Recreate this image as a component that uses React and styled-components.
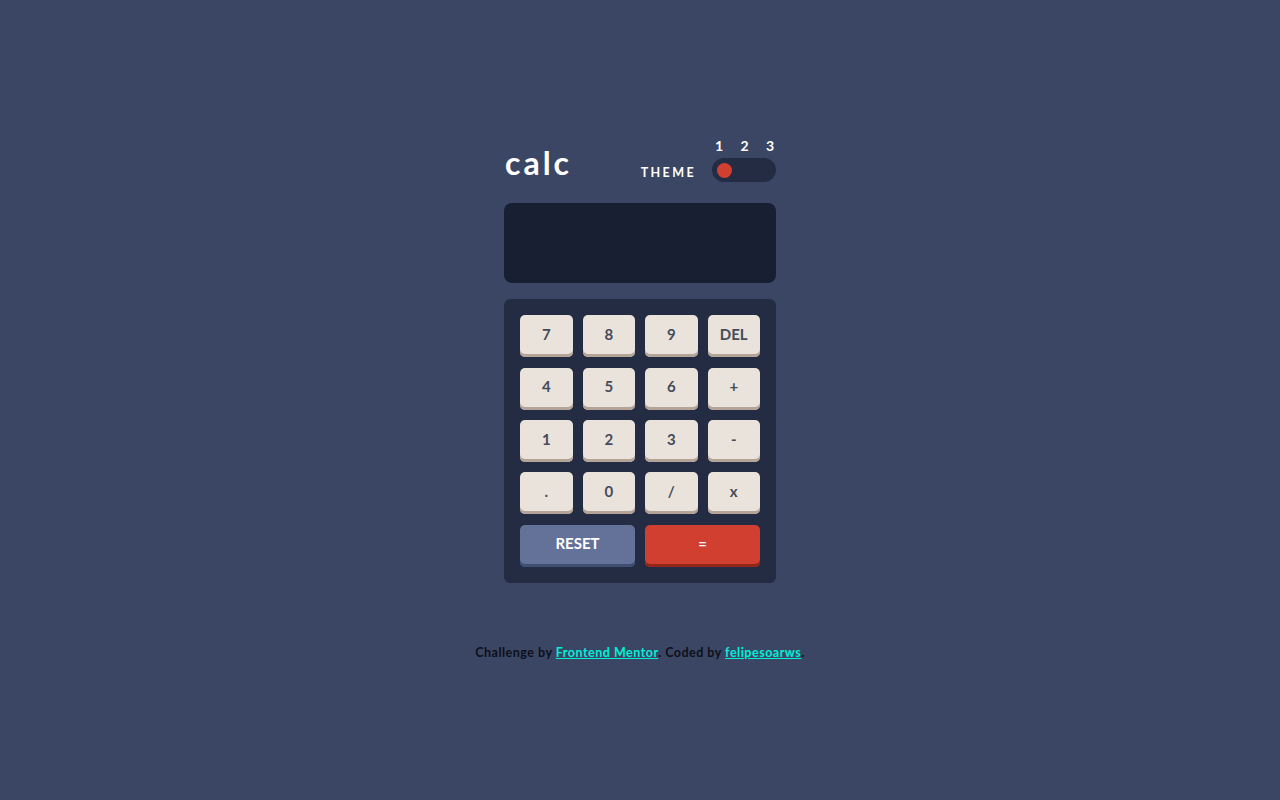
import React from 'react';
import styled, { createGlobalStyle } from 'styled-components';

const Colors = {
  page: '#3a4663',
  screen: '#181f33',
  keypad: '#232c43',
  key: '#eae3dc',
  keyShadow: '#b3a497',
  keyText: '#444b5a',
  reset: '#647198',
  resetShadow: '#414e73',
  equals: '#d03f2f',
  equalsShadow: '#93261a',
  white: '#ffffff',
  link: '#00f0d8',
};

const keys = ['7', '8', '9', 'DEL', '4', '5', '6', '+', '1', '2', '3', '-', '.', '0', '/', 'x'];

const GlobalStyle = createGlobalStyle`
  * { box-sizing: border-box; }
  body {
    margin: 0;
    background: ${Colors.page};
    font-family: Lato, "Noto Sans", sans-serif;
  }
`;

function App() {
  return (
    <Page>
      <GlobalStyle />
      <Calculator>
        <Header>
          <Title>calc</Title>
          <ThemeGroup>
            <ThemeLabel>THEME</ThemeLabel>
            <SwitchColumn>
              <Numbers>
                <span>1</span>
                <span>2</span>
                <span>3</span>
              </Numbers>
              <Toggle>
                <Dot />
              </Toggle>
            </SwitchColumn>
          </ThemeGroup>
        </Header>
        <Screen />
        <Keypad>
          {keys.map((k) => (
            <Key key={k}>{k}</Key>
          ))}
          <WideKey variant="reset">RESET</WideKey>
          <WideKey variant="equals">=</WideKey>
        </Keypad>
      </Calculator>
      <Attribution>
        Challenge by <Link href="#">Frontend Mentor</Link>. Coded by <Link href="#">felipesoarws</Link>.
      </Attribution>
    </Page>
  );
}

const Page = styled.main`
  min-height: 100vh;
  display: flex;
  flex-direction: column;
  align-items: center;
  justify-content: center;
  padding-bottom: 1px;
`;

const Calculator = styled.div`
  width: 272px;
`;

const Header = styled.header`
  display: flex;
  justify-content: space-between;
  align-items: flex-end;
  padding-left: 1px;
`;

const Title = styled.h1`
  margin: 0 0 3px;
  color: ${Colors.white};
  font-size: 32px;
  font-weight: 700;
  line-height: 1;
  letter-spacing: 3px;
`;

const ThemeGroup = styled.div`
  display: flex;
  align-items: flex-end;
  gap: 16px;
`;

const ThemeLabel = styled.span`
  color: ${Colors.white};
  font-size: 12.5px;
  font-weight: 700;
  letter-spacing: 2.4px;
  margin-bottom: 2px;
`;

const SwitchColumn = styled.div`
  display: flex;
  flex-direction: column;
  width: 64px;
`;

const Numbers = styled.div`
  display: flex;
  justify-content: space-between;
  padding: 0 2px 0 3px;
  color: ${Colors.white};
  font-size: 14px;
  font-weight: 700;
  line-height: 1;
  margin-bottom: 5px;
`;

const Toggle = styled.div`
  height: 24px;
  border-radius: 12px;
  background: ${Colors.keypad};
  display: flex;
  align-items: center;
  padding: 0 5px;
`;

const Dot = styled.span`
  width: 15px;
  height: 15px;
  border-radius: 50%;
  background: ${Colors.equals};
`;

const Screen = styled.div`
  margin-top: 21px;
  height: 80px;
  border-radius: 8px;
  background: ${Colors.screen};
`;

const Keypad = styled.div`
  margin-top: 16px;
  padding: 16px;
  border-radius: 6px;
  background: ${Colors.keypad};
  display: grid;
  grid-template-columns: repeat(4, 1fr);
  grid-auto-rows: 42px;
  column-gap: 10px;
  row-gap: 10.3px;
`;

const Key = styled.button`
  border: none;
  border-radius: 5px;
  background: ${Colors.key};
  box-shadow: inset 0 -3px 0 ${Colors.keyShadow};
  color: ${Colors.keyText};
  font-family: inherit;
  font-size: 15px;
  font-weight: 700;
  padding: 0 0 5px;
  cursor: pointer;
`;

const WideKey = styled(Key)`
  grid-column: span 2;
  background: ${(p) => (p.variant === 'reset' ? Colors.reset : Colors.equals)};
  box-shadow: inset 0 -3px 0 ${(p) => (p.variant === 'reset' ? Colors.resetShadow : Colors.equalsShadow)};
  color: ${Colors.white};
`;

const Attribution = styled.p`
  margin: 62px 0 0;
  font-size: 12.5px;
  font-weight: 700;
  letter-spacing: 0.5px;
  color: #0d0f1a;
`;

const Link = styled.a`
  color: ${Colors.link};
`;

export default App;
